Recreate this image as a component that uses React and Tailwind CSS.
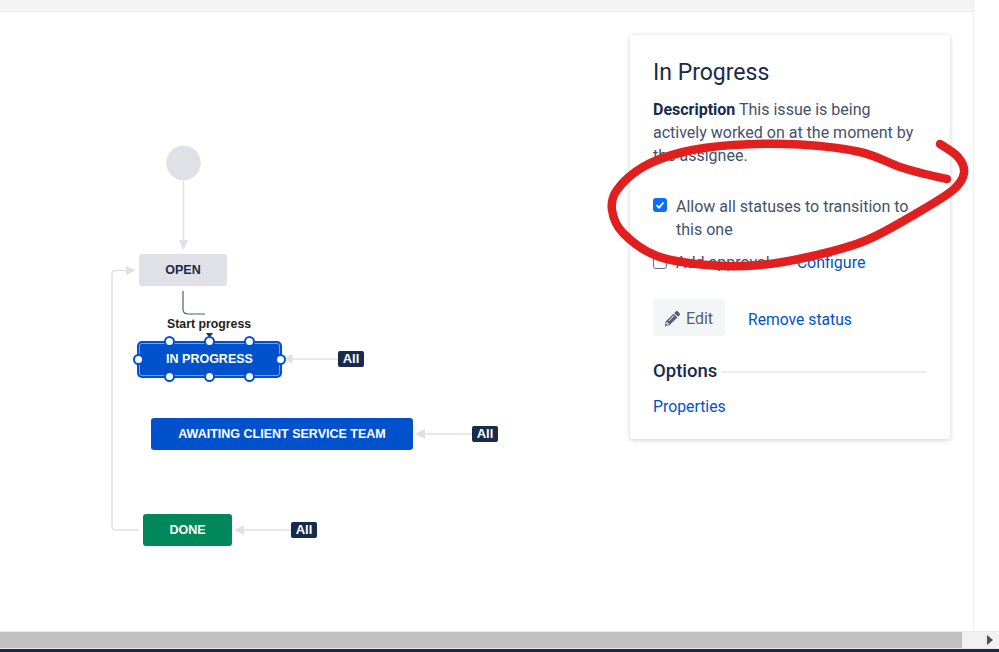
import React from "react";
import { FaPencilAlt } from "react-icons/fa";

const handles = [
  "left-[26.5px] top-[-5px]",
  "left-[66.5px] top-[-5px]",
  "left-[106.5px] top-[-5px]",
  "left-[26.5px] top-[30px]",
  "left-[66.5px] top-[30px]",
  "left-[106.5px] top-[30px]",
  "left-[-4.5px] top-[12.5px]",
  "left-[137.5px] top-[12.5px]",
];

// points traced along the red marker stroke
const scribble = [
  [947, 179], [925, 174], [900, 167], [860, 152], [800, 144.5], [733, 145], [683, 152], [643, 167],
  [617, 190], [612, 210], [623, 233], [657, 256], [707, 265], [760, 265], [817, 255], [867, 240],
  [917, 213], [953, 190], [964, 173], [958, 157], [940, 144],
];

function smoothPath(pts) {
  let d = `M${pts[0][0]} ${pts[0][1]}`;
  for (let i = 0; i < pts.length - 1; i++) {
    const p0 = pts[Math.max(i - 1, 0)];
    const p1 = pts[i];
    const p2 = pts[i + 1];
    const p3 = pts[Math.min(i + 2, pts.length - 1)];
    const c1 = [p1[0] + (p2[0] - p0[0]) / 6, p1[1] + (p2[1] - p0[1]) / 6];
    const c2 = [p2[0] - (p3[0] - p1[0]) / 6, p2[1] - (p3[1] - p1[1]) / 6];
    d += `C${c1[0]} ${c1[1]} ${c2[0]} ${c2[1]} ${p2[0]} ${p2[1]}`;
  }
  return d;
}

function Node({ className, children }) {
  return (
    <div className={`absolute flex items-center justify-center rounded-[3px] font-['Liberation_Sans',sans-serif] text-[12.5px] font-bold ${className}`}>
      {children}
    </div>
  );
}

function AllBadge({ className }) {
  return (
    <div className={`absolute flex h-4 w-[26px] items-center justify-center rounded-[2px] bg-[#172b4d] font-['Liberation_Sans',sans-serif] text-[13px] font-bold text-white ${className}`}>
      All
    </div>
  );
}

function Diagram() {
  return (
    <div className="relative h-full w-[630px] shrink-0">
      <svg className="absolute left-0 top-0" width="630" height="619" viewBox="0 12 630 619" fill="none">
        <circle cx="183.5" cy="163" r="17.3" fill="#dfe1e6" />
        <path d="M183.5 180V241" stroke="#dfe1e6" strokeWidth="1.5" />
        <path d="M179 240H188L183.5 250Z" fill="#dfe1e6" />
        <path d="M139 530H116Q112 530 112 526V275Q112 270.5 116 270.5H127" stroke="#dfe1e6" strokeWidth="1.5" />
        <path d="M126 266V275L135.5 270.5Z" fill="#dfe1e6" />
        <path d="M183 291V309Q183 314 188 314H205" stroke="#505f79" strokeWidth="1.2" />
        <path d="M206 333H213L209.5 338Z" fill="#253858" />
        <path d="M338 359H291" stroke="#dfe1e6" strokeWidth="1.5" />
        <path d="M292 354V364L284 359Z" fill="#dfe1e6" />
        <path d="M472 434H424" stroke="#dfe1e6" strokeWidth="1.5" />
        <path d="M425 429V439L415 434Z" fill="#dfe1e6" />
        <path d="M291 530H243" stroke="#dfe1e6" strokeWidth="1.5" />
        <path d="M244 525V535L234 530Z" fill="#dfe1e6" />
      </svg>
      <Node className="left-[139px] top-[242px] h-8 w-[88px] bg-[#dfe1e6] text-[#172b4d]">OPEN</Node>
      <div className="absolute left-[167px] top-[305px] font-['Liberation_Sans',sans-serif] text-[12.3px] font-bold leading-[14px] text-[#222222]">
        Start progress
      </div>
      <Node className="left-[137px] top-[329px] h-[37px] w-[145px] rounded-[5px] bg-[#0052cc] text-white">
        <div className="absolute inset-[2px] rounded-[3px] border border-[#7aa5e6]" />
        <span className="relative mb-[1px]">IN PROGRESS</span>
        {handles.map((pos) => (
          <span key={pos} className={`absolute h-[11px] w-[11px] rounded-full border-2 border-[#0052cc] bg-white ${pos}`} />
        ))}
      </Node>
      <AllBadge className="left-[338px] top-[339px]" />
      <Node className="left-[151px] top-[406px] h-8 w-[262px] bg-[#0052cc] text-white">AWAITING CLIENT SERVICE TEAM</Node>
      <AllBadge className="left-[472px] top-[414px]" />
      <Node className="left-[143px] top-[502px] h-8 w-[89px] bg-[#00875a] text-white">DONE</Node>
      <AllBadge className="left-[291px] top-[510px]" />
    </div>
  );
}

function Panel() {
  return (
    <div className="mt-[23px] h-[404px] w-[320px] shrink-0 rounded-[3px] bg-white px-[23px] pt-[24px] text-[16px] leading-[23px] text-[#42526e] shadow-[0_1px_5px_rgba(9,30,66,0.22)]">
      <h1 className="text-[23px] leading-[28px] text-[#172b4d]">In Progress</h1>
      <p className="mt-[11px]">
        <b className="font-bold text-[#172b4d]">Description</b> This issue is being actively worked on at the moment by the assignee.
      </p>
      <label className="mt-[28px] flex gap-[9px]">
        <span className="mt-[3px] flex h-[14px] w-[14px] shrink-0 items-center justify-center rounded-[3px] bg-[#0d6efd]">
          <svg width="10" height="10" viewBox="0 0 10 10" fill="none">
            <path d="M1.5 5.2L4 7.6L8.5 2.5" stroke="white" strokeWidth="1.8" />
          </svg>
        </span>
        <span>Allow all statuses to transition to this one</span>
      </label>
      <div className="mt-[10px] flex items-center">
        <span className="mr-[9px] h-[13px] w-[14px] shrink-0 rounded-[3px] border border-[#6b6f76] bg-white" />
        <span>Add approval</span>
        <a className="ml-[27px] text-[#0052cc]">Configure</a>
      </div>
      <div className="mt-[25px] flex items-center gap-[23px]">
        <button className="flex h-[37px] w-[72px] items-center justify-center gap-[6px] rounded-[3px] bg-[#f4f5f7] pt-[1px] text-[#505f79]">
          <FaPencilAlt className="h-[15px] w-[15px]" />
          Edit
        </button>
        <a className="pt-[3px] text-[15.7px] text-[#0052cc]">Remove status</a>
      </div>
      <div className="mt-[23px] flex items-center gap-[4px]">
        <h2 className="text-[18.5px] font-medium leading-[24px] text-[#172b4d]">Options</h2>
        <div className="mt-[1px] h-[2px] flex-1 bg-[#ebecf0]" />
      </div>
      <a className="mt-[12px] block text-[15.8px] text-[#0052cc]">Properties</a>
    </div>
  );
}

export default function App() {
  return (
    <div className="relative flex h-[652px] w-[999px] flex-col overflow-hidden bg-white font-['Roboto',sans-serif]">
      <div className="h-3 w-[974px] shrink-0 border-r border-b border-r-[#f0f0f0] border-b-[#ebebeb] bg-[#f4f4f4]" />
      <div className="flex min-h-0 flex-1">
        <main className="flex h-full w-[974px] border-r border-[#f0f0f0]">
          <Diagram />
          <Panel />
        </main>
      </div>
      <div className="flex h-[18px] shrink-0 border-y border-[#e9e9e9] bg-[#f1f1f1]">
        <div className="h-full w-[962px] bg-[#c0c0c0]" />
        <div className="flex flex-1 items-center justify-end pr-[6px]">
          <svg width="6" height="10" viewBox="0 0 6 10"><path d="M0 0L6 5L0 10Z" fill="#505050" /></svg>
        </div>
      </div>
      <div className="h-[3px] shrink-0 bg-[#172b4d]" />

      {/* red marker scribble on top of the screenshot */}
      <svg className="pointer-events-none absolute left-0 top-0" width="999" height="652" fill="none">
        <path d={smoothPath(scribble)} stroke="#e21f1f" strokeWidth="8.5" strokeLinecap="round" strokeLinejoin="round" />
      </svg>
    </div>
  );
}
